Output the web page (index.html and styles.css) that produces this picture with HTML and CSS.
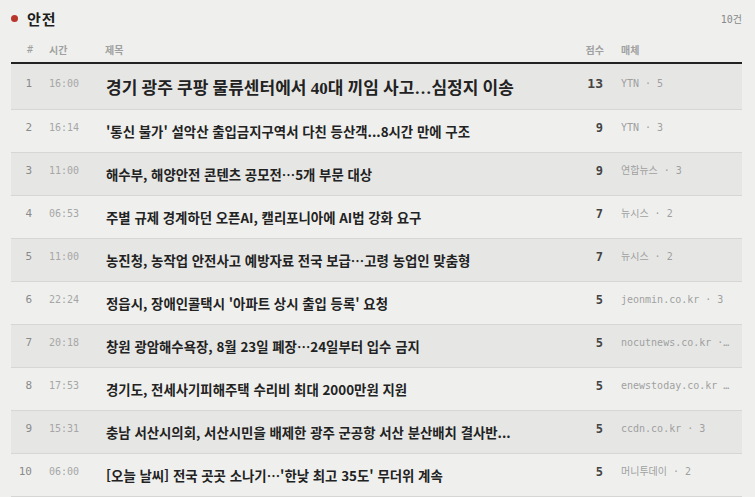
FILE: index.html
```html
<!DOCTYPE html>
<html lang="ko">
<head>
<meta charset="utf-8">
<link rel="stylesheet" href="styles.css">
</head>
<body>
<div class="panel">
  <div class="panel-head">
    <div class="panel-title"><span class="dot"></span><span>안전</span></div>
    <div class="panel-count">10건</div>
  </div>
  <table class="news">
    <thead>
      <tr>
        <th class="c-rank">#</th>
        <th class="c-time">시간</th>
        <th class="c-title">제목</th>
        <th class="c-score">점수</th>
        <th class="c-media">매체</th>
      </tr>
    </thead>
    <tbody>
      <tr class="top shade">
        <td class="c-rank">1</td><td class="c-time">16:00</td>
        <td class="c-title"><span class="t">경기 광주 쿠팡 물류센터에서 40대 끼임 사고…심정지 이송</span></td>
        <td class="c-score">13</td><td class="c-media"><span class="m">YTN · 5</span></td>
      </tr>
      <tr>
        <td class="c-rank">2</td><td class="c-time">16:14</td>
        <td class="c-title"><span class="t">'통신 불가' 설악산 출입금지구역서 다친 등산객...8시간 만에 구조</span></td>
        <td class="c-score">9</td><td class="c-media"><span class="m">YTN · 3</span></td>
      </tr>
      <tr class="shade">
        <td class="c-rank">3</td><td class="c-time">11:00</td>
        <td class="c-title"><span class="t">해수부, 해양안전 콘텐츠 공모전…5개 부문 대상</span></td>
        <td class="c-score">9</td><td class="c-media"><span class="m">연합뉴스 · 3</span></td>
      </tr>
      <tr>
        <td class="c-rank">4</td><td class="c-time">06:53</td>
        <td class="c-title"><span class="t">주별 규제 경계하던 오픈AI, 캘리포니아에 AI법 강화 요구</span></td>
        <td class="c-score">7</td><td class="c-media"><span class="m">뉴시스 · 2</span></td>
      </tr>
      <tr class="shade">
        <td class="c-rank">5</td><td class="c-time">11:00</td>
        <td class="c-title"><span class="t">농진청, 농작업 안전사고 예방자료 전국 보급…고령 농업인 맞춤형</span></td>
        <td class="c-score">7</td><td class="c-media"><span class="m">뉴시스 · 2</span></td>
      </tr>
      <tr>
        <td class="c-rank">6</td><td class="c-time">22:24</td>
        <td class="c-title"><span class="t">정읍시, 장애인콜택시 '아파트 상시 출입 등록' 요청</span></td>
        <td class="c-score">5</td><td class="c-media"><span class="m">jeonmin.co.kr · 3</span></td>
      </tr>
      <tr class="shade">
        <td class="c-rank">7</td><td class="c-time">20:18</td>
        <td class="c-title"><span class="t">창원 광암해수욕장, 8월 23일 폐장…24일부터 입수 금지</span></td>
        <td class="c-score">5</td><td class="c-media"><span class="m">nocutnews.co.kr · 3</span></td>
      </tr>
      <tr>
        <td class="c-rank">8</td><td class="c-time">17:53</td>
        <td class="c-title"><span class="t">경기도, 전세사기피해주택 수리비 최대 2000만원 지원</span></td>
        <td class="c-score">5</td><td class="c-media"><span class="m">enewstoday.co.kr · 3</span></td>
      </tr>
      <tr class="shade">
        <td class="c-rank">9</td><td class="c-time">15:31</td>
        <td class="c-title"><span class="t">충남 서산시의회, 서산시민을 배제한 광주 군공항 서산 분산배치 결사반...</span></td>
        <td class="c-score">5</td><td class="c-media"><span class="m">ccdn.co.kr · 3</span></td>
      </tr>
      <tr>
        <td class="c-rank">10</td><td class="c-time">06:00</td>
        <td class="c-title"><span class="t">[오늘 날씨] 전국 곳곳 소나기…'한낮 최고 35도' 무더위 계속</span></td>
        <td class="c-score">5</td><td class="c-media"><span class="m">머니투데이 · 2</span></td>
      </tr>
    </tbody>
  </table>
</div>
</body>
</html>
```

FILE: styles.css
```css
html, body {
  margin: 0;
  padding: 0;
  background: #eff0ee;
}
body {
  font-family: "Noto Sans CJK KR", "Noto Sans", sans-serif;
  color: #222;
}
.panel {
  padding: 0 13px 0 11px;
}
.panel-head {
  display: flex;
  justify-content: space-between;
  align-items: center;
  height: 36px;
}
.panel-title {
  display: flex;
  align-items: center;
  gap: 9px;
  font-size: 15px;
  font-weight: 700;
  color: #1e1e1e;
  letter-spacing: 1px;
}
.dot {
  width: 7px;
  height: 7px;
  border-radius: 50%;
  background: #b7352b;
}
.panel-count {
  font-family: "DejaVu Sans Mono", "Noto Sans CJK KR", monospace;
  font-size: 10px;
  color: #888;
}
.news {
  width: 731px;
  border-collapse: collapse;
  table-layout: fixed;
}
.news th {
  font-size: 10px;
  font-weight: 700;
  color: #a0a0a0;
  text-align: left;
  height: 26px;
  padding: 0;
  vertical-align: middle;
  border-bottom: 2px solid #222;
}
.news th.c-rank { text-align: right; font-family: "DejaVu Sans Mono", monospace; font-weight: 400; }
.news th.c-score { text-align: right; }
.news .c-rank { width: 22px; }
.news .c-time { width: 56px; padding-left: 16px; }
.news .c-score { width: 72px; }
.news .c-media { width: 121px; padding-left: 17px; }
.news td {
  padding-top: 10px;
  padding-bottom: 10px;
  vertical-align: top;
  border-bottom: 1px solid #d6d7d5;
}
.news tr.shade td { background: #e6e7e5; }
.news td.c-rank {
  text-align: right;
  font-family: "DejaVu Sans Mono", monospace;
  font-size: 11px;
  line-height: 16px;
  color: #8a8a8a;
}
.news td.c-time {
  font-family: "DejaVu Sans Mono", monospace;
  font-size: 10px;
  line-height: 16px;
  color: #a6a6a6;
}
.news td.c-title {
  font-size: 13.4px;
  font-weight: 700;
  line-height: 22px;
  color: #222;
}
.t {
  display: block;
  max-width: 420px;
  white-space: nowrap;
  overflow: hidden;
  text-overflow: ellipsis;
}
.news td.c-score {
  text-align: right;
  font-family: "DejaVu Sans Mono", monospace;
  font-size: 12px;
  font-weight: 700;
  line-height: 16px;
  color: #444;
}
.news td.c-media {
  font-family: "DejaVu Sans Mono", "Noto Sans CJK KR", monospace;
  font-size: 10px;
  line-height: 16px;
  color: #a0a0a0;
}
.m {
  display: block;
  max-width: 110px;
  white-space: nowrap;
  overflow: hidden;
  text-overflow: ellipsis;
}
.news tr.top td { padding-top: 12px; padding-bottom: 7px; }
.news tr.top td.c-title {
  font-family: "Liberation Serif", "Noto Sans CJK KR", serif;
  font-size: 17px;
  line-height: 26px;
}
.news tr.top .t { max-width: none; }
.news tr.top td.c-score { font-size: 13px; }
```
